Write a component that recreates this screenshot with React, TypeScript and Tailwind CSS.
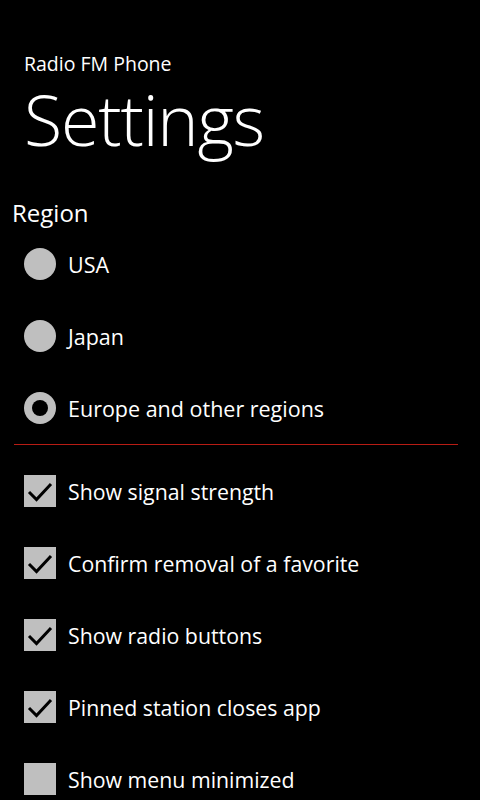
import { useState } from 'react';

const regions = ['USA', 'Japan', 'Europe and other regions'];

const options = [
  { label: 'Show signal strength', on: true },
  { label: 'Confirm removal of a favorite', on: true },
  { label: 'Show radio buttons', on: true },
  { label: 'Pinned station closes app', on: true },
  { label: 'Show menu minimized', on: false },
];

export default function App() {
  const [region, setRegion] = useState(2);
  const [checks, setChecks] = useState(options.map((o) => o.on));

  return (
    <div className="w-[480px] h-[800px] overflow-hidden bg-black text-white font-['Open_Sans',sans-serif]">
      <div className="pl-6 pt-[53px]">
        <div className="text-[19.5px] leading-[22px]">Radio FM Phone</div>
        <div className="mt-[8px] text-[70px] leading-[72px] font-light tracking-[-1.2px]">Settings</div>
      </div>

      <div className="mt-[42px] pl-3 text-[24px] leading-[32px]">Region</div>

      <div className="mt-[-1px]">
        {regions.map((r, i) => (
          <div
            key={r}
            onClick={() => setRegion(i)}
            className="h-[72px] flex items-center gap-3 pl-6 cursor-pointer"
          >
            <div className="w-8 h-8 shrink-0 rounded-full bg-[#bfbfbf] flex items-center justify-center">
              {region === i && <div className="w-[16px] h-[16px] rounded-full bg-black" />}
            </div>
            <span className="pt-[2px] text-[21.5px]">{r}</span>
          </div>
        ))}
      </div>

      <div className="ml-[14px] w-[444px] h-px bg-[#b81c14]" />

      <div className="mt-[10px]">
        {options.map((o, i) => (
          <div
            key={o.label}
            onClick={() => setChecks((c) => c.map((v, j) => (j === i ? !v : v)))}
            className="h-[72px] flex items-center gap-3 pl-6 cursor-pointer"
          >
            <div className="w-8 h-8 shrink-0 bg-[#bfbfbf]">
              {checks[i] && (
                <svg width="32" height="32" viewBox="0 0 32 32">
                  <polyline points="5,17 12.5,24.5 27,9" fill="none" stroke="#000" strokeWidth="3" />
                </svg>
              )}
            </div>
            <span className="pt-[2px] text-[21.3px]">{o.label}</span>
          </div>
        ))}
      </div>
    </div>
  );
}
